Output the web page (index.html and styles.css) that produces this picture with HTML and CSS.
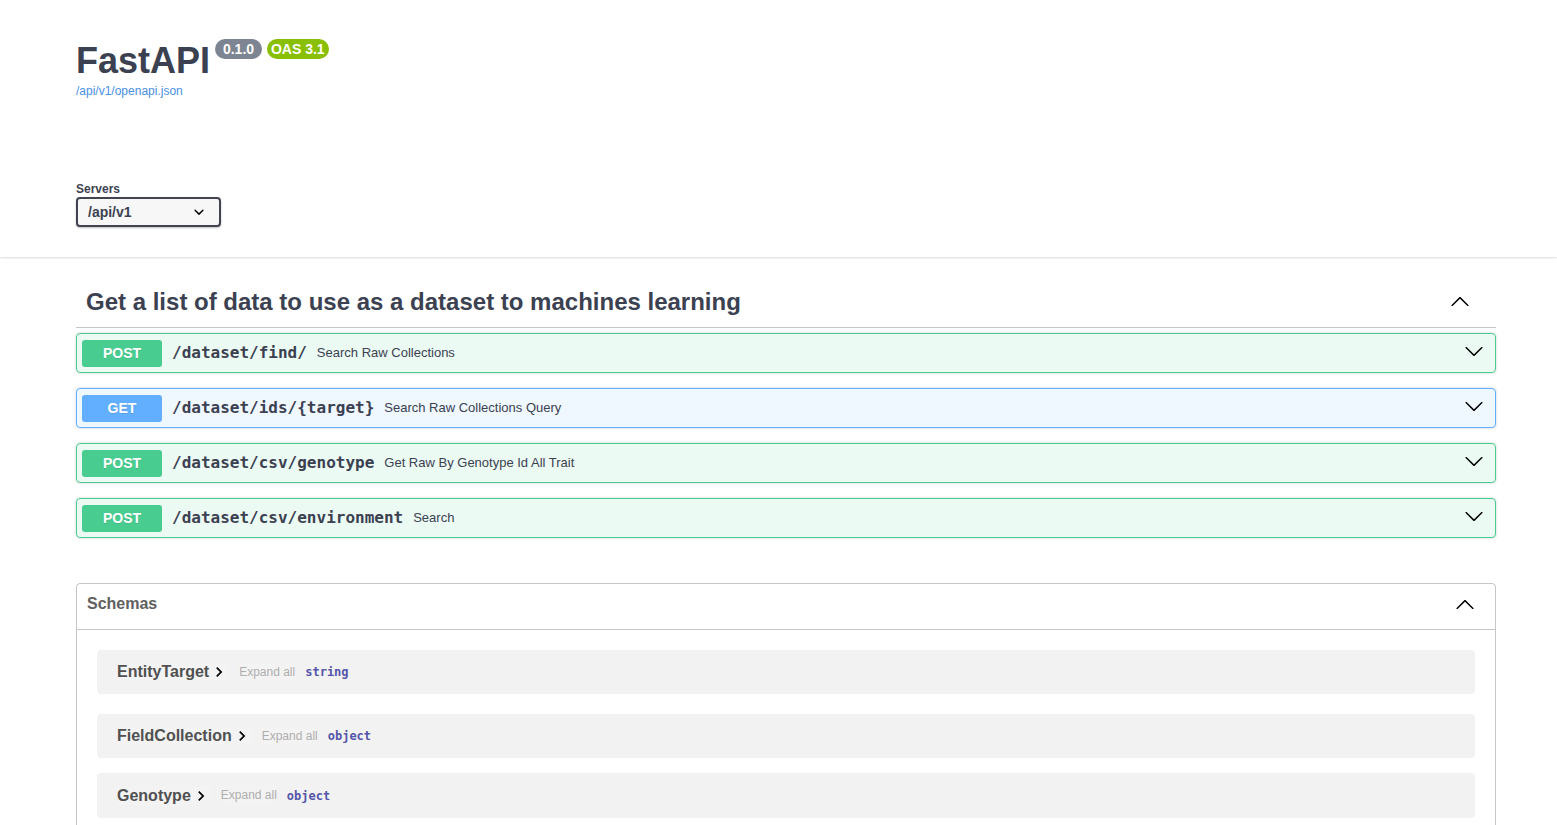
FILE: index.html
```html
<!DOCTYPE html>
<html lang="en">
<head>
<meta charset="utf-8">
<title>FastAPI - Swagger UI</title>
<link rel="stylesheet" href="styles.css">
</head>
<body>
<div class="swagger">
  <div class="wrapper info">
    <div class="title-row">
      <h2 class="title">FastAPI</h2>
      <span class="badge badge-version"> 0.1.0 </span>
      <span class="badge badge-oas">OAS 3.1</span>
    </div>
    <a class="spec-link" href="#">/api/v1/openapi.json</a>
  </div>

  <div class="scheme-container">
    <div class="wrapper">
      <div class="servers">
        <div class="servers-title">Servers</div>
        <div class="select">
          <span class="select-value">/api/v1</span>
          <svg class="select-arrow" viewBox="0 0 20 20" width="20" height="20"><path d="M13.418 7.859a.695.695 0 01.978 0 .68.68 0 010 .969l-3.908 3.83a.697.697 0 01-.979 0l-3.908-3.830a.68.68 0 010-.969.695.695 0 01.978 0L10 11l3.418-3.141z"/></svg>
        </div>
      </div>
    </div>
  </div>

  <div class="wrapper">
    <section class="tag-section">
      <h3 class="tag-heading">
        <span class="tag-name">Get a list of data to use as a dataset to machines learning</span>
        <span class="tag-arrow">
          <svg viewBox="0 0 20 20" width="20" height="20"><path d="M17.418 14.908c.272.268.709.268.979 0s.271-.701 0-.969l-7.908-7.830c-.27-.268-.707-.268-.979 0l-7.908 7.830c-.27.268-.27.701 0 .969.271.268.709.268.979 0L10 7.767l7.418 7.141z"/></svg>
        </span>
      </h3>
      <div class="opblocks">
        <div class="opblock opblock-post">
          <span class="method">POST</span>
          <span class="path">/dataset/find/</span>
          <span class="desc">Search Raw Collections</span>
          <svg class="op-arrow" viewBox="0 0 20 20" width="20" height="20"><path d="M17.418 6.109c.272-.268.709-.268.979 0s.271.701 0 .969l-7.908 7.830c-.27.268-.707.268-.979 0l-7.908-7.830c-.27-.268-.27-.701 0-.969.271-.268.709-.268.979 0L10 13.25l7.418-7.141z"/></svg>
        </div>
        <div class="opblock opblock-get">
          <span class="method">GET</span>
          <span class="path">/dataset/ids/{target}</span>
          <span class="desc">Search Raw Collections Query</span>
          <svg class="op-arrow" viewBox="0 0 20 20" width="20" height="20"><path d="M17.418 6.109c.272-.268.709-.268.979 0s.271.701 0 .969l-7.908 7.830c-.27.268-.707.268-.979 0l-7.908-7.830c-.27-.268-.27-.701 0-.969.271-.268.709-.268.979 0L10 13.25l7.418-7.141z"/></svg>
        </div>
        <div class="opblock opblock-post">
          <span class="method">POST</span>
          <span class="path">/dataset/csv/genotype</span>
          <span class="desc">Get Raw By Genotype Id All Trait</span>
          <svg class="op-arrow" viewBox="0 0 20 20" width="20" height="20"><path d="M17.418 6.109c.272-.268.709-.268.979 0s.271.701 0 .969l-7.908 7.830c-.27.268-.707.268-.979 0l-7.908-7.830c-.27-.268-.27-.701 0-.969.271-.268.709-.268.979 0L10 13.25l7.418-7.141z"/></svg>
        </div>
        <div class="opblock opblock-post">
          <span class="method">POST</span>
          <span class="path">/dataset/csv/environment</span>
          <span class="desc">Search</span>
          <svg class="op-arrow" viewBox="0 0 20 20" width="20" height="20"><path d="M17.418 6.109c.272-.268.709-.268.979 0s.271.701 0 .969l-7.908 7.830c-.27.268-.707.268-.979 0l-7.908-7.830c-.27-.268-.27-.701 0-.969.271-.268.709-.268.979 0L10 13.25l7.418-7.141z"/></svg>
        </div>
      </div>
    </section>

    <section class="models">
      <h4 class="models-heading">
        <span class="models-title">Schemas</span>
        <svg viewBox="0 0 20 20" width="20" height="20"><path d="M17.418 14.908c.272.268.709.268.979 0s.271-.701 0-.969l-7.908-7.830c-.27-.268-.707-.268-.979 0l-7.908 7.830c-.27.268-.27.701 0 .969.271.268.709.268.979 0L10 7.767l7.418 7.141z"/></svg>
      </h4>
      <div class="models-body">
        <div class="model-container first">
          <span class="model-title-btn"><span class="model-title">EntityTarget</span><svg class="model-chevron" viewBox="0 0 24 24" width="20" height="20"><path d="M10 6L8.59 7.41 13.17 12l-4.58 4.59L10 18l6-6z"/></svg></span>
          <span class="expand-btn">Expand all</span>
          <span class="model-type">string</span>
        </div>
        <div class="model-container">
          <span class="model-title-btn"><span class="model-title">FieldCollection</span><svg class="model-chevron" viewBox="0 0 24 24" width="20" height="20"><path d="M10 6L8.59 7.41 13.17 12l-4.58 4.59L10 18l6-6z"/></svg></span>
          <span class="expand-btn">Expand all</span>
          <span class="model-type">object</span>
        </div>
        <div class="model-container">
          <span class="model-title-btn"><span class="model-title">Genotype</span><svg class="model-chevron" viewBox="0 0 24 24" width="20" height="20"><path d="M10 6L8.59 7.41 13.17 12l-4.58 4.59L10 18l6-6z"/></svg></span>
          <span class="expand-btn">Expand all</span>
          <span class="model-type">object</span>
        </div>
      </div>
    </section>
  </div>
</div>
</body>
</html>
```

FILE: styles.css
```css
* { box-sizing: border-box; }

html, body {
  margin: 0;
  padding: 0;
  background: #fff;
}

body {
  font-family: "Liberation Sans", Arial, sans-serif;
  color: #3b4151;
}

.wrapper {
  width: 1420px;
  margin-left: 76px;
}

/* ---------- info ---------- */
.info {
  padding: 40px 0 53px;
}

.title-row {
  display: flex;
  align-items: flex-start;
}

.title {
  margin: 0;
  font-size: 36px;
  font-weight: 700;
  line-height: 41px;
  color: #3b4151;
}

.badge {
  margin: -1px 0 0 5px;
  padding: 2px 4px;
  border-radius: 57px;
  color: #fff;
  font-size: 14px;
  font-weight: 700;
  line-height: 16px;
  white-space: pre;
}

.badge-version { background: #7d8492; }
.badge-oas { background: #89bf04; }

.spec-link {
  display: block;
  margin-top: 3px;
  font-size: 12px;
  line-height: 14px;
  color: #4990e2;
  text-decoration: none;
}

/* ---------- servers ---------- */
.scheme-container {
  padding: 31px 0 30px;
  background: #fff;
  box-shadow: 0 1px 2px 0 rgba(0, 0, 0, .15);
}

.servers-title {
  font-size: 12px;
  font-weight: 700;
  line-height: 14px;
  color: #3b4151;
}

.select {
  margin-top: 1px;
  width: 145px;
  height: 30px;
  display: flex;
  align-items: center;
  justify-content: space-between;
  padding: 0 10px;
  border: 2px solid #41444e;
  border-radius: 4px;
  background: #f7f7f7;
  box-shadow: 0 1px 2px 0 rgba(0, 0, 0, .25);
  font-size: 14px;
  font-weight: 700;
  color: #3b4151;
}

.select-arrow { fill: #000; }

/* ---------- tag section ---------- */
.tag-section {
  margin-top: 20px;
}

.tag-heading {
  margin: 0;
  display: flex;
  align-items: center;
  padding: 10px 26px 10px 10px;
  border-bottom: 1px solid rgba(59, 65, 81, .3);
  font-size: 24px;
  font-weight: 700;
  line-height: 30px;
  color: #3b4151;
}

.tag-name { flex: 1; }

.tag-arrow {
  display: flex;
  height: 20px;
  margin-top: -3px;
}

.tag-arrow svg,
.op-arrow,
.models-heading svg { fill: #000; }

.opblocks {
  margin-top: 5px;
  display: flex;
  flex-direction: column;
  gap: 15px;
}

.opblock {
  display: flex;
  align-items: center;
  height: 40px;
  padding: 5px 11px 5px 5px;
  border: 1px solid;
  border-radius: 4px;
  box-shadow: 0 0 3px rgba(0, 0, 0, .19);
}

.opblock-post {
  background: rgba(73, 204, 144, .1);
  border-color: #49cc90;
}

.opblock-get {
  background: rgba(97, 175, 254, .1);
  border-color: #61affe;
}

.method {
  min-width: 80px;
  height: 27px;
  line-height: 26px;
  text-align: center;
  border-radius: 3px;
  color: #fff;
  font-size: 14px;
  font-weight: 700;
  text-shadow: 0 1px 0 rgba(0, 0, 0, .1);
}

.opblock-post .method { background: #49cc90; }
.opblock-get .method { background: #61affe; }

.path {
  padding: 0 10px;
  font-family: "DejaVu Sans Mono", monospace;
  font-size: 16px;
  font-weight: 700;
  line-height: 18px;
  margin-top: -1px;
  color: #3b4151;
}

.desc {
  flex: 1;
  font-size: 13px;
  line-height: 15px;
  margin-top: -1px;
  color: #3b4151;
}

.op-arrow {
  margin-top: -5px;
}

/* ---------- models ---------- */
.models {
  margin-top: 45px;
  border: 1px solid rgba(59, 65, 81, .3);
  border-radius: 4px;
}

.models-heading {
  margin: 0;
  display: flex;
  align-items: center;
  padding: 7px 20px 13px 10px;
  border-bottom: 1px solid rgba(59, 65, 81, .3);
  font-size: 16px;
  font-weight: 700;
  line-height: 25px;
  color: #606060;
}

.models-title { flex: 1; }

.models-body {
  display: flex;
  flex-direction: column;
  padding: 20px 20px 20px;
}

.model-container {
  display: flex;
  align-items: center;
  gap: 10px;
  height: 44px;
  padding: 0 20px;
  margin-bottom: 15px;
  border-radius: 4px;
  background: rgba(0, 0, 0, .05);
}

.model-container.first { margin-bottom: 20px; }
.model-container:last-child { height: 45px; margin-bottom: 0; }

.model-title-btn {
  display: flex;
  align-items: center;
  height: 19px;
  background: rgba(255, 255, 255, .12);
}

.model-title {
  font-size: 16px;
  font-weight: 700;
  color: #505050;
}

.model-chevron { fill: #000; }

.expand-btn {
  font-size: 12px;
  color: #afaeae;
  background: rgba(255, 255, 255, .12);
  line-height: 19px;
}

.model-type {
  font-family: "DejaVu Sans Mono", monospace;
  font-size: 12px;
  font-weight: 700;
  color: #55a;
}
```
